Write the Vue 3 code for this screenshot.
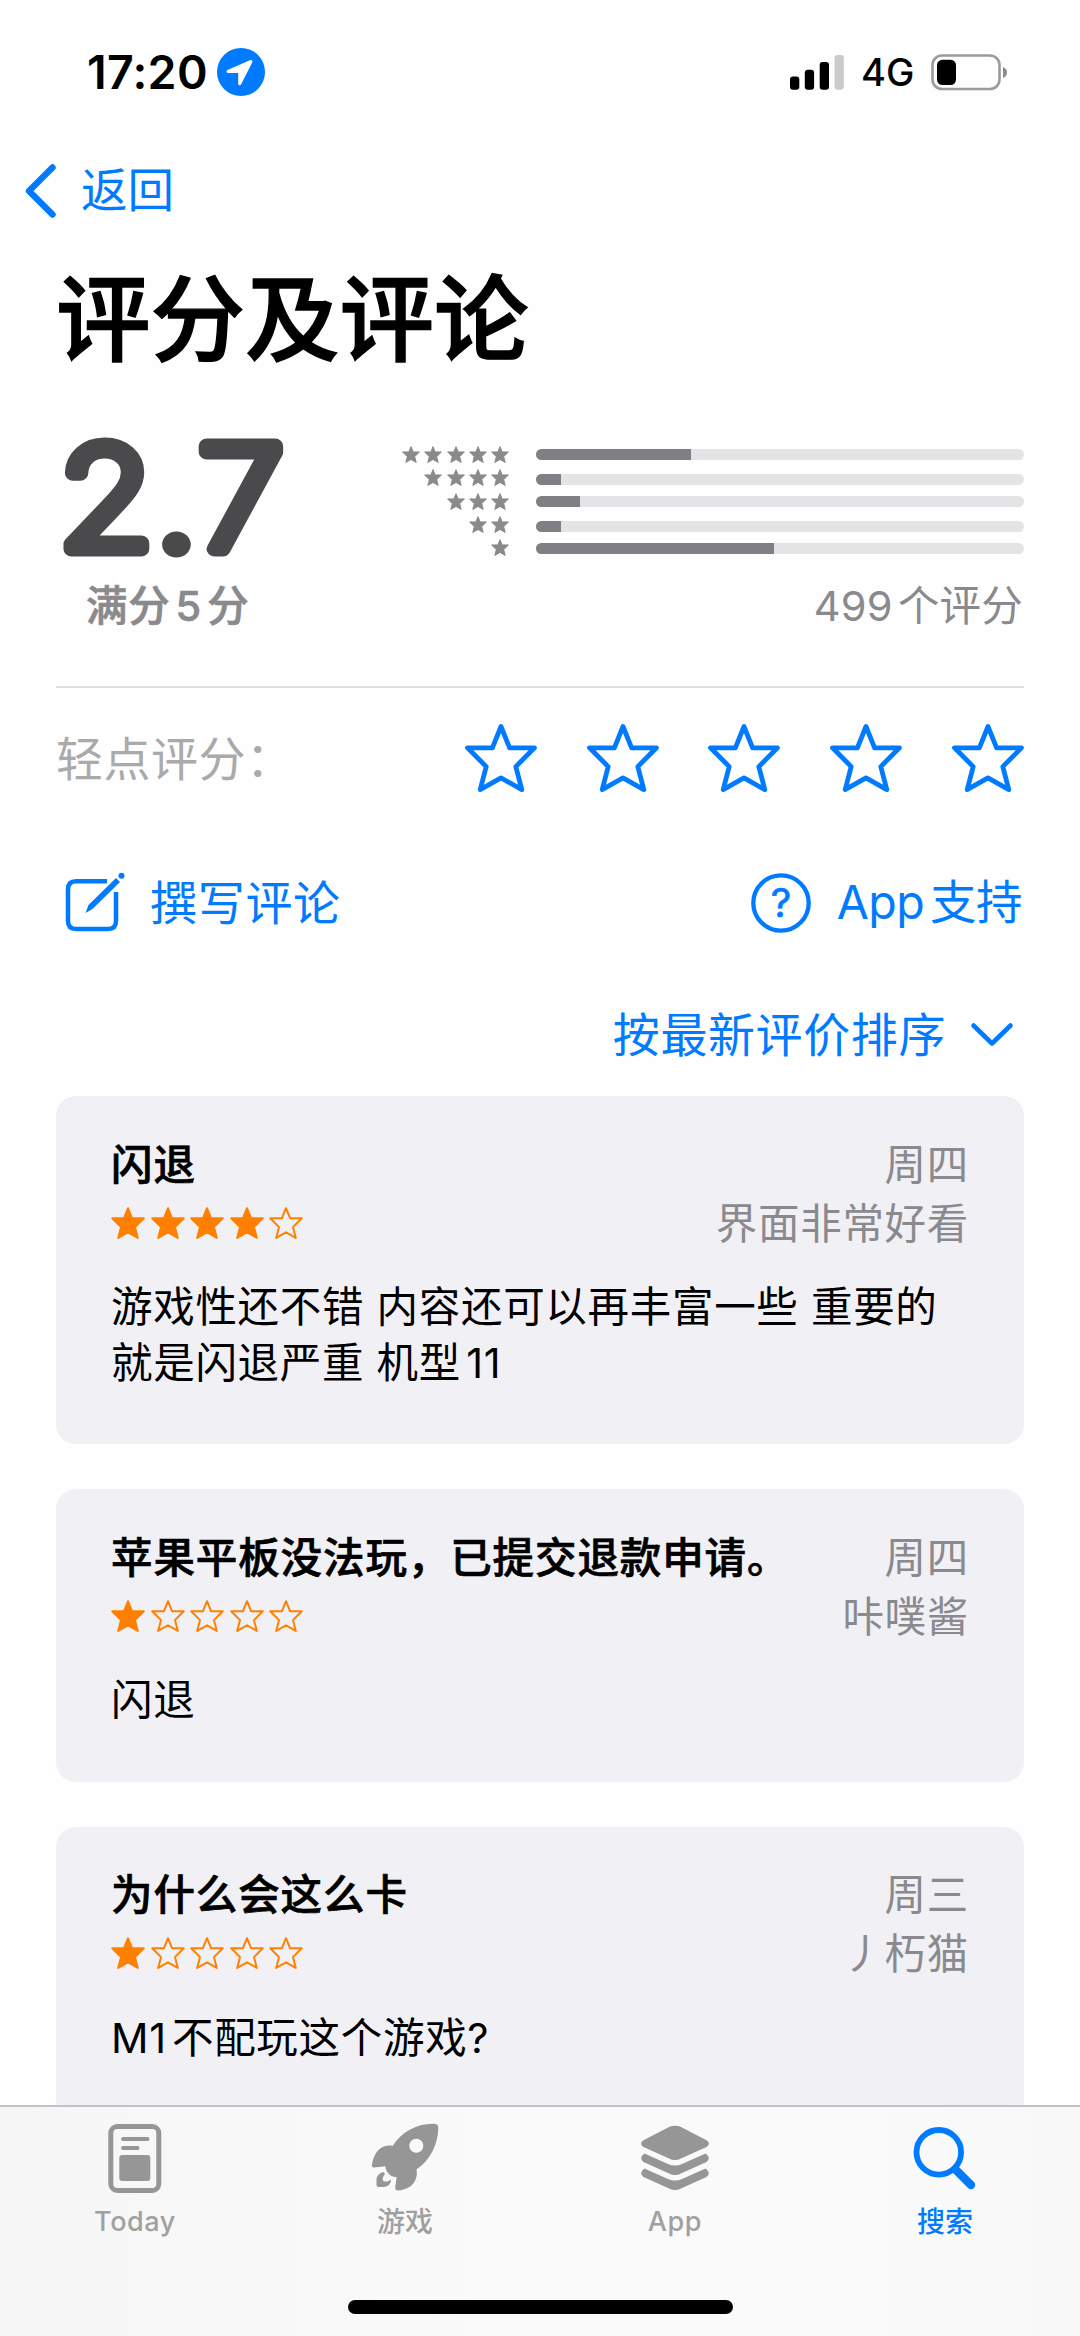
<script setup>
const histogram = [
  { stars: 5, percent: 31.8, top: 6 },
  { stars: 4, percent: 5.1, top: 8 },
  { stars: 3, percent: 9.1, top: 6 },
  { stars: 2, percent: 5.1, top: 8 },
  { stars: 1, percent: 48.8, top: 7 },
]

const reviews = [
  {
    title: '闪退',
    rating: 4,
    date: '周四',
    author: '界面非常好看',
    lines: ['游戏性还不错 内容还可以再丰富一些 重要的', '就是闪退严重 机型11'],
  },
  {
    title: '苹果平板没法玩，已提交退款申请。',
    rating: 1,
    date: '周四',
    author: '咔噗酱',
    lines: ['闪退'],
  },
  {
    title: '为什么会这么卡',
    rating: 1,
    date: '周三',
    author: '丿朽猫',
    lines: ['M1不配玩这个游戏?'],
  },
]

const starPath = 'M0-34.5 8.6-13.2H33.5L14.8 5.6 20.8 28.6 0 16.8-20.8 28.6-14.8 5.6-33.5-13.2H-8.6Z'
</script>

<template>
  <div class="screen">
    <header class="status">
      <div class="clock">
        <span class="time">17:20</span>
        <svg class="location" viewBox="0 0 48 48">
          <circle cx="24" cy="24" r="24" fill="#007aff" />
          <path d="M34 13.5 11 23.5H22.7V35.800Z" fill="#fff" stroke="#fff" stroke-width="3" stroke-linejoin="round" />
        </svg>
      </div>
      <div class="indicators">
        <svg width="54" height="35" viewBox="0 0 54 35">
          <rect x="0" y="21.500" width="9.300" height="13.300" rx="3" />
          <rect x="14.800" y="14.800" width="9.300" height="20" rx="3" />
          <rect x="29.700" y="7" width="9.300" height="27.800" rx="3" />
          <rect x="44.500" y="0" width="9.300" height="34.800" rx="3" fill="#cbcbcb" />
        </svg>
        <span class="network">4G</span>
        <svg width="77" height="37" viewBox="0 0 77 37">
          <rect x="1.500" y="1.500" width="67" height="33.500" rx="9.500" fill="none" stroke="#9b9b9b" stroke-width="2.600" />
          <rect x="6" y="5.700" width="19" height="25.300" rx="5.500" />
          <path d="M72 13q4 1.500 4 5.500t-4 5.500z" fill="#8b8b8b" />
        </svg>
      </div>
    </header>

    <nav class="back">
      <svg width="32" height="56" viewBox="0 0 32 56">
        <path d="M27.500 4.500 4 28 27.500 51.500" fill="none" stroke="#007aff" stroke-width="6.400" stroke-linecap="round" stroke-linejoin="round" />
      </svg>
      <span>返回</span>
    </nav>

    <h1>评分及评论</h1>

    <section class="summary">
      <div class="score">
        <svg class="score-value" width="240" height="130" viewBox="0 0 240 130">
          <text x="2 90 129" y="118.500" transform="scale(1.1 1)">2.7</text>
        </svg>
        <div class="out-of">满分5分</div>
      </div>
      <div class="breakdown">
        <div v-for="row in histogram" :key="row.stars" class="bar-row">
          <div class="tiny-stars">
            <svg v-for="n in row.stars" :key="n" width="18" height="17" viewBox="-36 -37 72 68">
              <path :d="starPath" fill="#8a8a8d" stroke="#8a8a8d" stroke-width="4" stroke-linejoin="round" />
            </svg>
          </div>
          <div class="track" :style="{ marginTop: row.top + 'px' }">
            <div class="fill" :style="{ width: row.percent + '%' }"></div>
          </div>
        </div>
        <div class="count">499个评分</div>
      </div>
    </section>

    <section class="tap-rate">
      <span class="hint">轻点评分：</span>
      <div class="big-stars">
        <svg v-for="n in 5" :key="n" width="72" height="70" viewBox="-36 -37 72 70">
          <path :d="starPath" fill="none" stroke="#007aff" stroke-width="4.800" stroke-linejoin="round" />
        </svg>
      </div>
    </section>

    <section class="actions">
      <a class="action">
        <svg width="60" height="60" viewBox="0 0 60 60">
          <path d="M42 8.300H11Q3 8.300 3 16.300V48Q3 56 11 56H43Q51 56 51 48V19" fill="none" stroke="#007aff" stroke-width="4.500" />
          <path d="M20.500 40 23.500 32 51 5 55 9 27.500 36Z" fill="#007aff" />
          <circle cx="56.500" cy="2.800" r="3" fill="#007aff" />
        </svg>
        <span class="write">撰写评论</span>
      </a>
      <a class="action">
        <svg width="60" height="60" viewBox="0 0 60 60">
          <circle cx="30" cy="30" r="27.700" fill="none" stroke="#007aff" stroke-width="4.300" />
          <text x="30" y="44" class="question">?</text>
        </svg>
        <span class="support">App支持</span>
      </a>
    </section>

    <div class="sort">
      <span>按最新评价排序</span>
      <svg width="44" height="26" viewBox="0 0 44 26">
        <path d="M3.500 3.500 22 21.500 40.500 3.500" fill="none" stroke="#007aff" stroke-width="4.600" stroke-linecap="round" stroke-linejoin="round" />
      </svg>
    </div>

    <main class="reviews">
      <article v-for="review in reviews" :key="review.title" class="card">
        <div class="row">
          <h2>{{ review.title }}</h2>
          <span class="meta">{{ review.date }}</span>
        </div>
        <div class="row">
          <div class="rating">
            <svg v-for="n in 5" :key="n" width="34" height="33" viewBox="-36 -37 72 70">
              <path :d="starPath" :fill="n <= review.rating ? '#ff8000' : 'none'" stroke="#ff8000" stroke-width="4.200" stroke-linejoin="round" />
            </svg>
          </div>
          <span class="meta">{{ review.author }}</span>
        </div>
        <div class="body">
          <p v-for="line in review.lines" :key="line">{{ line }}</p>
        </div>
      </article>
    </main>

    <footer class="tabbar">
      <a class="tab">
        <svg width="80" height="76" viewBox="0 0 80 76">
          <rect x="15.800" y="6.500" width="48" height="64" rx="6.500" fill="none" stroke="#969696" stroke-width="5" />
          <rect x="26" y="17" width="28.500" height="4" rx="2" />
          <rect x="26" y="26" width="18.500" height="4" rx="2" />
          <rect x="24.300" y="35" width="31" height="26" rx="3" />
        </svg>
        <span class="latin">Today</span>
      </a>
      <a class="tab">
        <svg width="80" height="76" viewBox="0 0 80 76">
          <path fill-rule="evenodd" d="M27.800 25.700C37 12 51 3.500 69 3.800Q73.300 3.800 73.300 8C73 25 65 40 51.500 49.500C53.500 60 47 69.500 33 70.500Q30 70.500 30.200 67L31.700 57C26 57.500 21 52.500 20.300 46.200L9 47.600Q6.200 47.500 7 44.500C9 31 17 24 27.800 25.700ZM51.300 18.700a7 7 0 1 0 .01 0Z" />
          <path d="M18.500 52C14 53 11.500 56 11.500 60V65Q11.500 67 13.500 67H18C23 67 26 64 26 59.500C24 61.500 19 62.500 18 60.500C17 58 19 55.500 20 54Z" />
        </svg>
        <span>游戏</span>
      </a>
      <a class="tab">
        <svg width="80" height="76" viewBox="0 0 80 76">
          <path d="M8.500 20.200 34 7Q40 4.500 46 7L71.500 20.200Q76.500 23.500 71.500 27L46 38.500Q40 41.500 34 38.500L8.500 27Q3.500 23.500 8.500 20.200Z" />
          <path d="M9.500 33.500 33 44Q40 47 47 44L70.500 33.500Q76.500 38 71.500 42L46 53.500Q40 56.500 34 53.500L8.500 42Q3.500 38 9.500 33.500Z" />
          <path d="M9.500 48.500 33 59Q40 62 47 59L70.500 48.500Q76.500 53 71.500 57L46 68.500Q40 71.500 34 68.500L8.500 57Q3.500 53 9.500 48.500Z" />
        </svg>
        <span class="latin">App</span>
      </a>
      <a class="tab active">
        <svg width="80" height="76" viewBox="0 0 80 76">
          <circle cx="33.800" cy="32.300" r="22.300" fill="none" stroke="#007aff" stroke-width="5.800" />
          <path d="M50.500 49.500 66 65" stroke="#007aff" stroke-width="8.300" stroke-linecap="round" />
        </svg>
        <span>搜索</span>
      </a>
      <div class="home"></div>
    </footer>
  </div>
</template>

<style>
html,
body {
  margin: 0;
  background: #fefefe;
}
</style>

<style scoped>
.screen {
  display: flex;
  flex-direction: column;
  width: 1080px;
  height: 2336px;
  overflow: hidden;
  background: #fefefe;
  color: #000;
  font-family: Inter, 'Noto Sans CJK SC', sans-serif;
  line-height: 1.2;
  text-autospace: normal;
  white-space: nowrap;
}
svg {
  display: block;
  flex: none;
  overflow: visible;
}
h1,
h2,
p {
  margin: 0;
}
.status {
  display: flex;
  justify-content: space-between;
  align-items: center;
  height: 144px;
  padding: 0 72px 0 87px;
  flex: none;
}
.clock,
.indicators {
  display: flex;
  align-items: center;
}
.time {
  width: 130px;
  padding-top: 1px;
  font-size: 46.500px;
  font-weight: 600;
  letter-spacing: 0.300px;
}
.location {
  width: 48px;
  height: 48px;
}
.network {
  width: 70px;
  padding-left: 17px;
  padding-top: 2px;
  font-size: 38px;
  font-weight: 500;
}
.back {
  display: flex;
  align-items: center;
  gap: 24px;
  height: 94px;
  padding-left: 25px;
  flex: none;
  color: #007aff;
  font-size: 46.500px;
}
h1 {
  height: 162px;
  padding-left: 56px;
  flex: none;
  font-size: 94.500px;
  font-weight: 500;
  line-height: 164px;
  -webkit-text-stroke: 1.400px #000;
}
.summary {
  display: flex;
  justify-content: space-between;
  height: 256px;
  margin: 0 56px;
  padding-top: 30px;
  flex: none;
  border-bottom: 2px solid #e0e0e2;
}
.score {
  width: 240px;
}
.score-value text {
  font-family: Inter, sans-serif;
  font-size: 141px;
  font-weight: 200;
  fill: #4a4a4d;
  stroke: #4a4a4d;
  stroke-width: 15px;
  stroke-linejoin: round;
}
.out-of {
  margin-top: 19px;
  padding-left: 30px;
  color: #8a8a8d;
  font-size: 41.500px;
  font-weight: 500;
  line-height: 54px;
  letter-spacing: 0.700px;
  -webkit-text-stroke: 0.700px #8a8a8d;
}
.breakdown {
  width: 625px;
  padding-top: 13px;
}
.bar-row {
  display: flex;
  justify-content: space-between;
  height: 23.250px;
}
.tiny-stars {
  display: flex;
  justify-content: flex-end;
  gap: 4.200px;
  width: 110px;
  padding-top: 3px;
}
.track {
  width: 488px;
  height: 11px;
  margin-left: auto;
  border-radius: 6px;
  background: #e4e4e6;
  overflow: hidden;
}
.fill {
  height: 100%;
  background: #808084;
}
.count {
  margin-top: 20px;
  padding-right: 1px;
  color: #8a8a8d;
  font-size: 41.500px;
  line-height: 54px;
  letter-spacing: 0.200px;
  text-align: right;
}
.tap-rate {
  display: flex;
  justify-content: space-between;
  align-items: center;
  height: 142px;
  padding: 0 56px 2px;
  flex: none;
}
.hint {
  color: #aaa;
  font-size: 47px;
  letter-spacing: 0.500px;
}
.big-stars {
  display: flex;
  gap: 49.800px;
}
.actions {
  display: flex;
  justify-content: space-between;
  align-items: center;
  height: 142px;
  padding: 0 58px 0 65px;
  flex: none;
  color: #007aff;
  font-size: 47px;
}
.action {
  display: flex;
  align-items: center;
}
.write {
  padding-left: 25px;
  letter-spacing: 0.700px;
}
.support {
  padding-left: 26px;
  font-size: 46.500px;
  letter-spacing: -0.500px;
}
.question {
  font-family: Inter, sans-serif;
  font-size: 40px;
  font-weight: 400;
  text-anchor: middle;
  fill: #007aff;
  stroke: #007aff;
  stroke-width: 0.700px;
}
.sort {
  display: flex;
  align-items: center;
  justify-content: flex-end;
  gap: 24px;
  height: 122px;
  padding-right: 66px;
  flex: none;
  color: #007aff;
  font-size: 47px;
  letter-spacing: 0.600px;
}
.reviews {
  display: flex;
  flex-direction: column;
  gap: 45px;
  height: 1009px;
  padding: 0 56px;
  flex: none;
  overflow: hidden;
}
.card {
  padding: 39px 55px 53px;
  flex: none;
  border-radius: 20px;
  background: #f1f0f5;
  font-size: 41.500px;
  letter-spacing: 0.700px;
}
.row {
  display: flex;
  justify-content: space-between;
  align-items: center;
  height: 59px;
}
h2 {
  padding-top: 2px;
  font-size: 41.500px;
  font-weight: 500;
  letter-spacing: 0.900px;
  -webkit-text-stroke: 0.700px #000;
}
.meta {
  padding-top: 2px;
  color: #8a8a8e;
}
.rating {
  display: flex;
  gap: 5.600px;
  padding-bottom: 1px;
}
.body {
  padding-top: 27px;
}
.body p {
  height: 55.600px;
  line-height: 55.600px;
}
.tabbar {
  display: grid;
  grid-template-columns: repeat(4, 270px);
  grid-template-rows: 193px 15px;
  height: 231px;
  box-sizing: border-box;
  border-top: 2px solid #c3c3c7;
  background: linear-gradient(90deg, #f6f6f6, #fafafb 45%, #fafafb 80%, #f8f8f8);
  flex: none;
}
.tab {
  display: flex;
  flex-direction: column;
  align-items: center;
  padding-top: 13px;
  color: #a0a0a0;
  fill: #969696;
  font-size: 28px;
  font-weight: 500;
  line-height: 52px;
}
.latin {
  font-size: 27px;
  letter-spacing: 0.600px;
}
.active {
  color: #007aff;
}
.home {
  grid-column: 1 / -1;
  justify-self: center;
  width: 385px;
  height: 14px;
  border-radius: 7px;
  background: #000;
}
</style>
